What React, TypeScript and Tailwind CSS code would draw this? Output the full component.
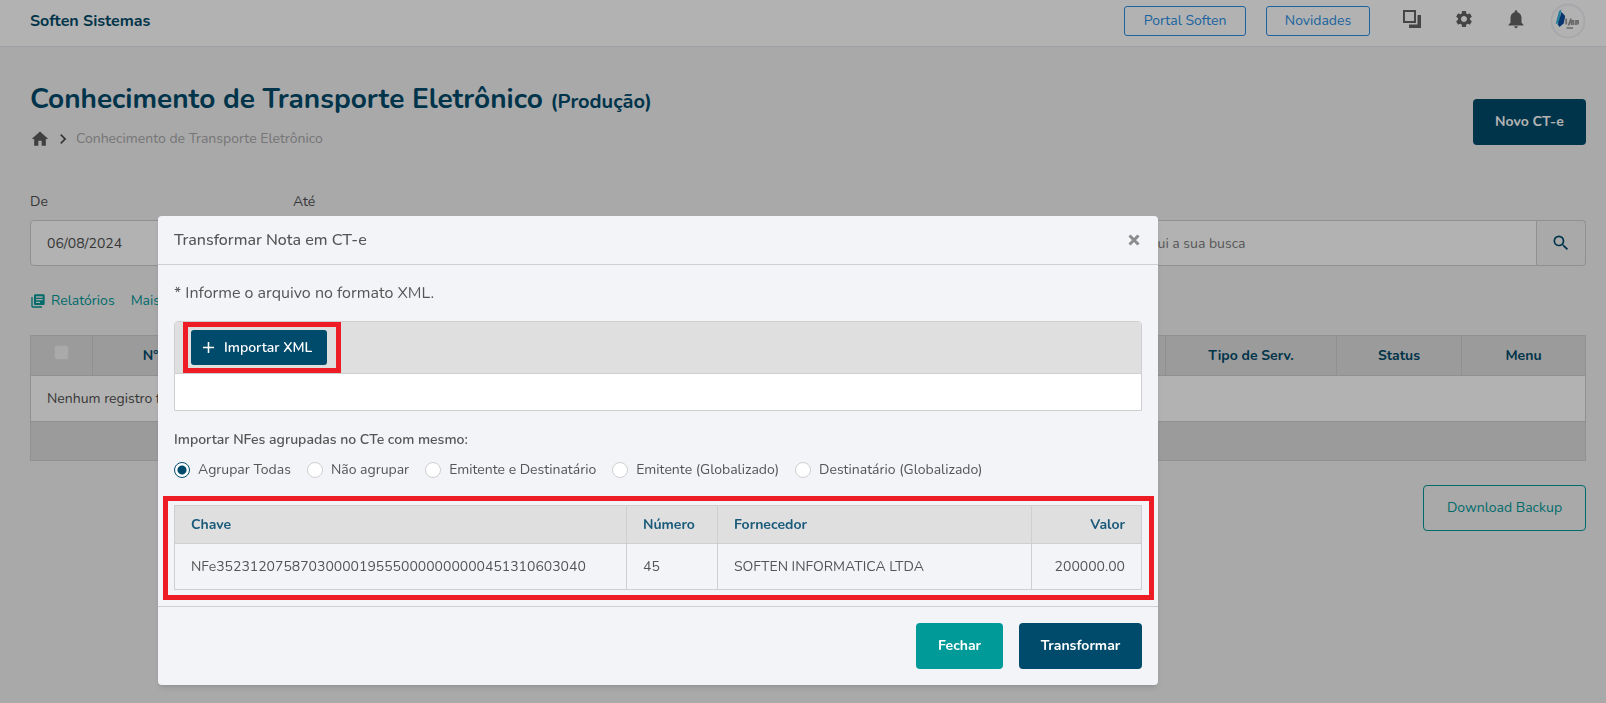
import type { ReactNode } from "react";
import { MdAdd, MdChevronRight, MdHome, MdLibraryBooks, MdNotifications, MdSearch, MdSettings } from "react-icons/md";

const GROUP_OPTIONS = [
  "Agrupar Todas",
  "Não agrupar",
  "Emitente e Destinatário",
  "Emitente (Globalizado)",
  "Destinatário (Globalizado)",
];

const NOTES = [
  { chave: "NFe35231207587030000195550000000000451310603040", numero: "45", fornecedor: "SOFTEN INFORMATICA LTDA", valor: "200000.00" },
];

function CopyIcon() {
  return (
    <svg viewBox="0 0 18 18" className="size-[18px]" aria-hidden="true">
      <path d="M1 1h11v11H1z" fill="none" stroke="currentColor" strokeWidth="2" />
      <path d="M14.500 5H18v13H6v-3.500h8.500z" fill="currentColor" />
    </svg>
  );
}

function Avatar() {
  return (
    <svg viewBox="0 0 36 36" className="size-9" aria-hidden="true">
      <circle cx="18" cy="18" r="16.500" fill="#fff" stroke="#f0f1f5" strokeWidth="2" />
      <path d="M9 8 11.500 6.500 9 20 5.700 21z" fill="#35b5e0" />
      <path d="M11.500 9 15.200 13 13.700 20.500 9.500 24 7.800 21.500z" fill="#0b4da0" />
      <path d="M16.200 15.500v6M18.500 22.500l2.500-7M21.500 22v-4h2V22M26 22v-4h2v3.500" fill="none" stroke="#9a9a9a" strokeWidth="1.800" />
      <path d="M16.500 25h6.500" stroke="#b0b0b0" strokeWidth="2" />
    </svg>
  );
}

function IconButton({ label, children }: { label: string; children: ReactNode }) {
  return (
    <button type="button" aria-label={label} className="flex size-6 items-center justify-center text-[#646464]">
      {children}
    </button>
  );
}

function Header() {
  return (
    <header className="flex h-[47px] items-start justify-between border-b border-[#e2e3ec] bg-white pl-[30px] pr-5 pt-[3px]">
      <strong className="text-base leading-9 text-[#004b6b]">Soften Sistemas</strong>
      <div className="flex h-9 items-center">
        <button type="button" className="mr-5 h-[30px] w-[122px] rounded-[3px] border border-[#2a8fe6] text-sm text-[#2a8fe6]">
          Portal Soften
        </button>
        <button type="button" className="mr-[30px] h-[30px] w-[104px] rounded-[3px] border border-[#2a8fe6] text-sm text-[#2a8fe6]">
          Novidades
        </button>
        <div className="mb-1 mr-[22px] flex gap-7">
          <IconButton label="Janelas"><CopyIcon /></IconButton>
          <IconButton label="Configurações"><MdSettings size={20} /></IconButton>
          <IconButton label="Notificações"><MdNotifications size={22} /></IconButton>
        </div>
        <Avatar />
      </div>
    </header>
  );
}

function Filters() {
  const field = "h-[46px] w-full border border-[#cfcfcf] bg-white px-4 text-sm text-[#505050] placeholder:text-[#7d7d7d]";
  return (
    <div className="mt-[43px] flex items-end gap-4">
      <div className="w-[247px]">
        <label htmlFor="de" className="mb-2 block text-sm text-[#505050]">De</label>
        <input id="de" defaultValue="06/08/2024" className={`${field} rounded`} />
      </div>
      <div className="w-[247px]">
        <label htmlFor="ate" className="mb-2 block text-sm text-[#505050]">Até</label>
        <input id="ate" className={`${field} rounded`} />
      </div>
      <div className="ml-auto flex w-[502px]">
        <input aria-label="Busca" placeholder="Digite aqui a sua busca" className={`${field} rounded-l`} />
        <button type="button" aria-label="Buscar" className="flex h-[46px] w-[49px] shrink-0 items-center justify-center rounded-r border border-l-0 border-[#cfcfcf] text-[#004b6b]">
          <MdSearch size={20} />
        </button>
      </div>
    </div>
  );
}

function RecordsTable() {
  const th = "border border-[#cfcfcf] font-bold text-[#004b6b]";
  return (
    <table className="mt-6 w-full table-fixed border-collapse text-sm text-[#505050]">
      <colgroup>
        <col className="w-[62px]" />
        <col className="w-[116px]" />
        <col />
        <col className="w-[171px]" />
        <col className="w-[125px]" />
        <col className="w-[124px]" />
      </colgroup>
      <thead className="bg-[#dfdfdf]">
        <tr className="h-10">
          <th className={th}>
            <input type="checkbox" aria-label="Selecionar todos" className="mx-auto mb-1.5 block size-[15px] appearance-none rounded-[3px] border border-[#e3e3e3] bg-[#f4f4f4]" />
          </th>
          <th className={th}>Nº</th>
          <th className={th} />
          <th className={th}>Tipo de Serv.</th>
          <th className={th}>Status</th>
          <th className={th}>Menu</th>
        </tr>
      </thead>
      <tbody className="bg-white">
        <tr className="h-[46px]">
          <td colSpan={6} className="border border-[#cfcfcf] px-4">Nenhum registro foi encontrado</td>
        </tr>
      </tbody>
      <tfoot className="bg-[#dfdfdf]">
        <tr className="h-[39px]">
          <td colSpan={6} className="border border-[#cfcfcf]" />
        </tr>
      </tfoot>
    </table>
  );
}

function TransformModal() {
  const cell = "border border-[#cfcfcf] px-4";
  return (
    <div className="fixed inset-0 bg-black/30 px-[158px] pt-[216px]">
      <div role="dialog" aria-labelledby="modal-title" className="w-full max-w-[1000px] rounded bg-[#f3f4f8] text-sm text-[#555] shadow-md">
        <div className="flex h-[49px] items-center justify-between border-b border-[#cfcfcf] px-4">
          <h2 id="modal-title" className="text-base font-medium">Transformar Nota em CT-e</h2>
          <button type="button" aria-label="Fechar janela" className="flex size-4 items-center justify-center text-[#8c8c8c]">
            <svg viewBox="0 0 12 12" className="size-3" aria-hidden="true">
              <path d="M1.500 1.500 10.500 10.500M10.500 1.500 1.500 10.500" stroke="currentColor" strokeWidth="3" />
            </svg>
          </button>
        </div>

        <div className="p-4">
          <p className="text-base">* Informe o arquivo no formato XML.</p>

          <div className="mt-4 overflow-hidden rounded-t border border-[#cfcfcf] bg-white">
            <div className="relative flex h-[52px] items-center border-b border-[#cfcfcf] bg-[#dfdfdf] px-4">
              <button type="button" className="flex h-[35px] w-[136px] items-center gap-[6px] rounded-[3px] bg-[#004b6b] pl-2 font-semibold text-white">
                <MdAdd size={19} />
                Importar XML
              </button>
              <div className="pointer-events-none absolute inset-y-0 left-2 w-[158px] border-[5px] border-[#ee1c24]" />
            </div>
            <div className="h-9" />
          </div>

          <fieldset className="mt-[19px]">
            <legend className="font-semibold">Importar NFes agrupadas no CTe com mesmo:</legend>
            <div className="mt-[10px] flex gap-4">
              {GROUP_OPTIONS.map((option, i) => (
                <label key={option} className="flex items-center gap-2">
                  <input
                    type="radio"
                    name="agrupar"
                    defaultChecked={i === 0}
                    className="size-4 appearance-none rounded-full border border-[#cfcfcf] bg-white checked:border-[#004b6b] checked:bg-[radial-gradient(circle,#004b6b_4px,#fff_5px)]"
                  />
                  {option}
                </label>
              ))}
            </div>
          </fieldset>

          <div className="relative mt-[25px]">
            <table className="w-full table-fixed border-collapse">
              <colgroup>
                <col className="w-[452px]" />
                <col className="w-[91px]" />
                <col />
                <col className="w-[110px]" />
              </colgroup>
              <thead className="bg-[#dfdfdf] text-left text-[#1a5a7a]">
                <tr className="h-[38px]">
                  <th className={cell}>Chave</th>
                  <th className={cell}>Número</th>
                  <th className={cell}>Fornecedor</th>
                  <th className={`${cell} text-right`}>Valor</th>
                </tr>
              </thead>
              <tbody>
                {NOTES.map((n) => (
                  <tr key={n.chave} className="h-[46px]">
                    <td className={cell}>{n.chave}</td>
                    <td className={cell}>{n.numero}</td>
                    <td className={cell}>{n.fornecedor}</td>
                    <td className={`${cell} text-right`}>{n.valor}</td>
                  </tr>
                ))}
              </tbody>
            </table>
            <div className="pointer-events-none absolute -bottom-[10px] -left-[11px] -right-3 -top-[9px] border-[5px] border-[#ee1c24]" />
          </div>
        </div>

        <div className="flex justify-end gap-4 border-t border-[#cfcfcf] p-4 font-bold text-white">
          <button type="button" className="h-[46px] w-[87px] rounded bg-[#009a98]">Fechar</button>
          <button type="button" className="h-[46px] w-[123px] rounded bg-[#004b6b]">Transformar</button>
        </div>
      </div>
    </div>
  );
}

export default function App() {
  return (
    <div className="min-h-screen bg-[#f2f2f4] font-['Nunito','Lato',sans-serif]">
      <Header />
      <main className="pl-[30px] pr-5">
        <div className="flex items-start justify-between pt-[34px]">
          <div>
            <h1 className="text-[28px] font-bold leading-9 text-[#004b6b]">
              Conhecimento de Transporte Eletrônico <small className="text-xl">(Produção)</small>
            </h1>
            <nav aria-label="Trilha" className="mt-3 flex items-center text-sm text-[#a9a9a9]">
              <a href="#" aria-label="Início" className="text-[#5c5c5c]"><MdHome size={20} /></a>
              <MdChevronRight size={20} className="mx-[3px] text-[#505050]" />
              <span>Conhecimento de Transporte Eletrônico</span>
            </nav>
          </div>
          <button type="button" className="mt-[18px] h-[46px] w-[113px] rounded bg-[#004b6b] text-sm font-bold text-white">
            Novo CT-e
          </button>
        </div>

        <Filters />

        <div className="mt-[25px] flex gap-4 text-sm text-[#009a98]">
          <a href="#" className="flex items-center gap-[5px]"><MdLibraryBooks size={16} />Relatórios</a>
          <a href="#">Mais</a>
        </div>

        <RecordsTable />

        <div className="mt-6 flex justify-end">
          <button type="button" className="h-[46px] w-[163px] rounded border border-[#009a98] text-sm text-[#009a98]">
            Download Backup
          </button>
        </div>
      </main>
      <TransformModal />
    </div>
  );
}
